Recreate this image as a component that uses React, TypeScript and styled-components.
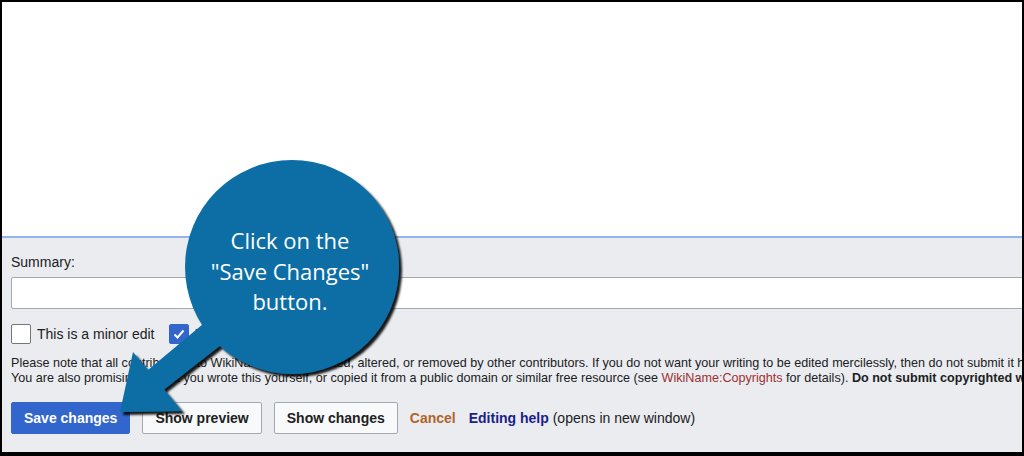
import React from "react";
import styled, { createGlobalStyle } from "styled-components";

/**
 * Page reset: black backdrop shows as the thin frame round the screenshot.
 */
const GlobalStyle = createGlobalStyle`
  html, body {
    margin: 0;
    padding: 0;
    background: #000;
  }
  #root {
    padding: 2px 2px 4px 2px;
  }
`;

const Frame = styled.div`
  position: relative;
  width: 1020px;
  height: 450px;
  overflow: hidden;
  background: #eaecf0;
  font-family: "Liberation Sans", Arial, sans-serif;
  color: #202122;
`;

/**
 * Bottom of the edit textarea.
 */
const Editor = styled.div`
  height: 236px;
  box-sizing: border-box;
  background: #fff;
  border-bottom: 2px solid #93b4ec;
`;

const Options = styled.div`
  display: flex;
  flex-direction: column;
  padding: 16px 0 0 9px;
`;

const SummaryLabel = styled.label`
  font-size: 14px;
  line-height: 16px;
  margin-bottom: 7px;
`;

const SummaryInput = styled.div`
  width: calc(100% + 20px);
  height: 32px;
  box-sizing: border-box;
  background: #fff;
  border: 1px solid #a2a9b1;
  border-radius: 2px;
`;

const CheckRow = styled.div`
  display: flex;
  align-items: center;
  margin-top: 15px;
  height: 20px;
`;

const CheckBox = styled.span<{ $checked?: boolean }>`
  display: inline-flex;
  align-items: center;
  justify-content: center;
  width: 20px;
  height: 20px;
  box-sizing: border-box;
  border-radius: 2px;
  border: 1px solid ${(p) => (p.$checked ? "#3366cc" : "#72777d")};
  background: ${(p) => (p.$checked ? "#3366cc" : "#fff")};
`;

const CheckLabel = styled.span`
  font-size: 14px;
  margin: 0 15px 0 6px;
`;

const Notice = styled.div`
  margin-top: 12px;
  font-size: 12.6px;
  line-height: 15px;
  white-space: nowrap;
`;

const RedLink = styled.span`
  color: #a03030;
`;

const Actions = styled.div`
  display: flex;
  align-items: center;
  gap: 12px;
  margin-top: 16px;
`;

const Button = styled.button<{ $primary?: boolean }>`
  height: 32px;
  padding: 0 12px;
  box-sizing: border-box;
  border-radius: 2px;
  font-family: inherit;
  font-size: 14px;
  font-weight: bold;
  border: 1px solid ${(p) => (p.$primary ? "#3366cc" : "#a2a9b1")};
  background: ${(p) => (p.$primary ? "#3366cc" : "#f8f9fa")};
  color: ${(p) => (p.$primary ? "#fff" : "#202122")};
`;

const CancelLink = styled.span`
  font-size: 14px;
  font-weight: bold;
  color: #b0642a;
`;

const HelpText = styled.span`
  margin-left: 1px;
  font-size: 14px;
`;

const HelpLink = styled.b`
  color: #1b1f8a;
`;

/**
 * Speech bubble callout laid over the form.
 */
const CalloutArt = styled.svg`
  position: absolute;
  left: 98px;
  top: 148px;
  width: 320px;
  height: 280px;
  overflow: visible;
`;

const CalloutText = styled.div`
  position: absolute;
  left: 181px;
  top: 158px;
  width: 214px;
  height: 214px;
  padding-top: 8px;
  box-sizing: border-box;
  display: flex;
  align-items: center;
  justify-content: center;
  text-align: center;
  font-family: "Open Sans", sans-serif;
  font-size: 22px;
  line-height: 30.5px;
  color: #fff;
`;

const Check = () => (
  <svg width="14" height="14" viewBox="0 0 14 14">
    <path d="M2.5 7.5 L5.5 10.5 L11.5 3.5" fill="none" stroke="#fff" strokeWidth="2" />
  </svg>
);

export default function App() {
  return (
    <>
      <GlobalStyle />
      <Frame>
        <Editor />
        <Options>
          <SummaryLabel>Summary:</SummaryLabel>
          <SummaryInput />
          <CheckRow>
            <CheckBox />
            <CheckLabel>This is a minor edit</CheckLabel>
            <CheckBox $checked>
              <Check />
            </CheckBox>
            <CheckLabel>Watch this page</CheckLabel>
          </CheckRow>
          <Notice>
            <div>
              Please note that all contributions to WikiName may be edited, altered, or removed by other
              contributors. If you do not want your writing to be edited mercilessly, then do not submit it here.
            </div>
            <div>
              You are also promising us that you wrote this yourself, or copied it from a public domain or similar
              free resource (see <RedLink>WikiName:Copyrights</RedLink> for details).{" "}
              <b>Do not submit copyrighted work without permission!</b>
            </div>
          </Notice>
          <Actions>
            <Button $primary>Save changes</Button>
            <Button>Show preview</Button>
            <Button>Show changes</Button>
            <CancelLink>Cancel</CancelLink>
            <HelpText>
              <HelpLink>Editing help</HelpLink> (opens in new window)
            </HelpText>
          </Actions>
        </Options>

        <CalloutArt viewBox="100 150 320 280">
          <defs>
            <filter id="shade" x="-20%" y="-20%" width="140%" height="140%">
              <feDropShadow dx="3" dy="3" stdDeviation="1" floodColor="#000" floodOpacity="0.9" />
            </filter>
          </defs>
          <g fill="#0b6ea5" filter="url(#shade)">
            <circle cx="292" cy="267" r="107" />
            <path d="M120 412 L133 352 L148 370 L215 314 L240 330 L164 389.5 L182 411 Z" />
          </g>
        </CalloutArt>
        <CalloutText>
          Click on the
          <br />
          "Save Changes"
          <br />
          button.
        </CalloutText>
      </Frame>
    </>
  );
}
